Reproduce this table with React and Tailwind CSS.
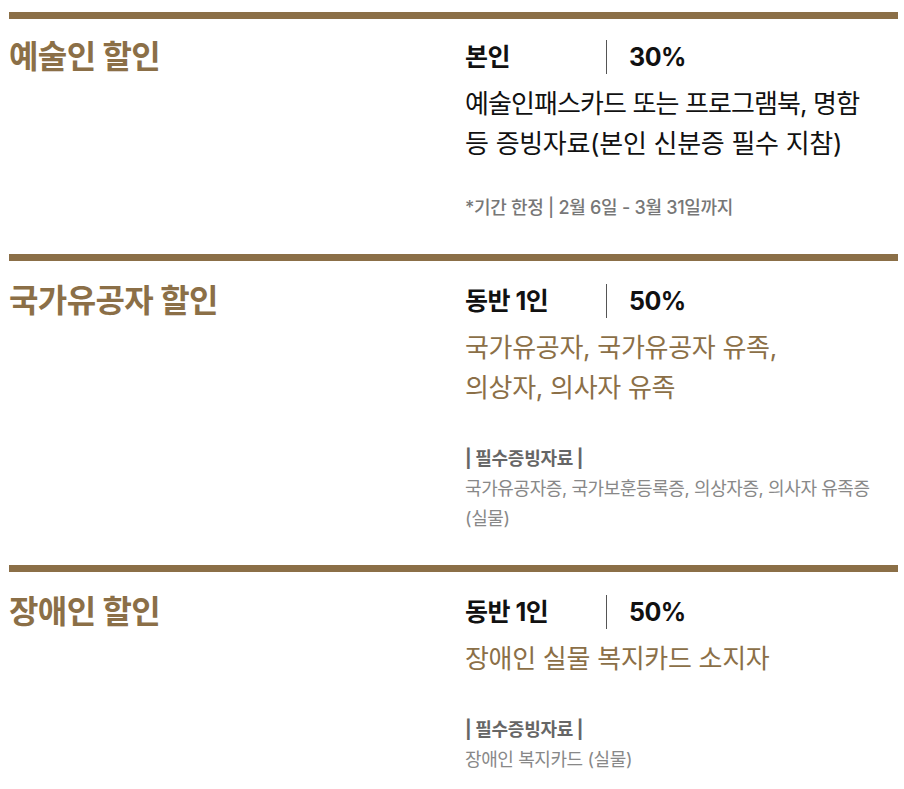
import React from "react";

const sections = [
  {
    title: "예술인 할인",
    label: "본인",
    rate: "30%",
    desc: [
      { t: "예술인패스카드 또는 프로그램북, 명함", c: "tracking-[-0.9px]" },
      { t: "등 증빙자료(본인 신분증 필수 지참)", c: "tracking-[-0.3px]" },
    ],
    descBrown: false,
    note: "*기간 한정 | 2월 6일 - 3월 31일까지",
    pt: "pt-[21px]",
  },
  {
    title: "국가유공자 할인",
    label: "동반 1인",
    rate: "50%",
    desc: [
      { t: "국가유공자, 국가유공자 유족,", c: "tracking-[-0.3px]" },
      { t: "의상자, 의사자 유족", c: "tracking-[-0.3px]" },
    ],
    descBrown: true,
    docs: ["국가유공자증, 국가보훈등록증, 의상자증, 의사자 유족증", "(실물)"],
    pt: "pt-[23px]",
  },
  {
    title: "장애인 할인",
    label: "동반 1인",
    rate: "50%",
    desc: [{ t: "장애인 실물 복지카드 소지자", c: "tracking-[-0.3px]" }],
    descBrown: true,
    docs: ["장애인 복지카드 (실물)"],
    pt: "pt-[23px]",
  },
];

export default function App() {
  return (
    <div
      className="w-[904px] min-h-[789px] bg-white pt-[12px] pl-[9px] pr-[6px]"
      style={{ fontFamily: 'Inter, "Noto Sans CJK KR", "Noto Sans", sans-serif' }}
    >
      {sections.map((s, i) => (
        <section key={i} className="pb-[31px]">
          <div className="h-[7px] bg-[#8b6f47]" />
          <div className={"flex " + s.pt}>
            <h2 className="w-[456px] shrink-0 text-[32px] font-bold leading-[34px] text-[#8b6f47] tracking-[-0.6px]">
              {s.title}
            </h2>
            <div className="flex-1">
              <div className="flex items-center h-[34px]">
                <div className="w-[141px] text-[25px] font-bold text-[#111] leading-[34px] tracking-[-0.5px]">
                  {s.label}
                </div>
                <div className="border-l border-[#555] h-[34px] pl-[22px] text-[25px] font-bold text-[#111] leading-[34px] tracking-[-0.5px]">
                  {s.rate}
                </div>
              </div>
              <div
                className={
                  "mt-[10px] text-[26px] leading-[40px] " +
                  (s.descBrown ? "text-[#8b6f47]" : "text-[#111]")
                }
              >
                {s.desc.map((d, j) => (
                  <div key={j} className={d.c + " whitespace-nowrap"}>
                    {d.t}
                  </div>
                ))}
              </div>
              {s.note && (
                <div className="mt-[29px] text-[18px] leading-[30px] text-[#777] font-medium tracking-[-0.3px]">
                  {s.note}
                </div>
              )}
              {s.docs && (
                <div className="mt-[36px]">
                  <div className="text-[18px] leading-[30px] font-bold text-[#666] tracking-[-0.3px]">
                    | 필수증빙자료 |
                  </div>
                  {s.docs.map((d, j) => (
                    <div key={j} className="text-[18px] leading-[30px] text-[#888] tracking-[-0.4px]">
                      {d}
                    </div>
                  ))}
                </div>
              )}
            </div>
          </div>
        </section>
      ))}
    </div>
  );
}
